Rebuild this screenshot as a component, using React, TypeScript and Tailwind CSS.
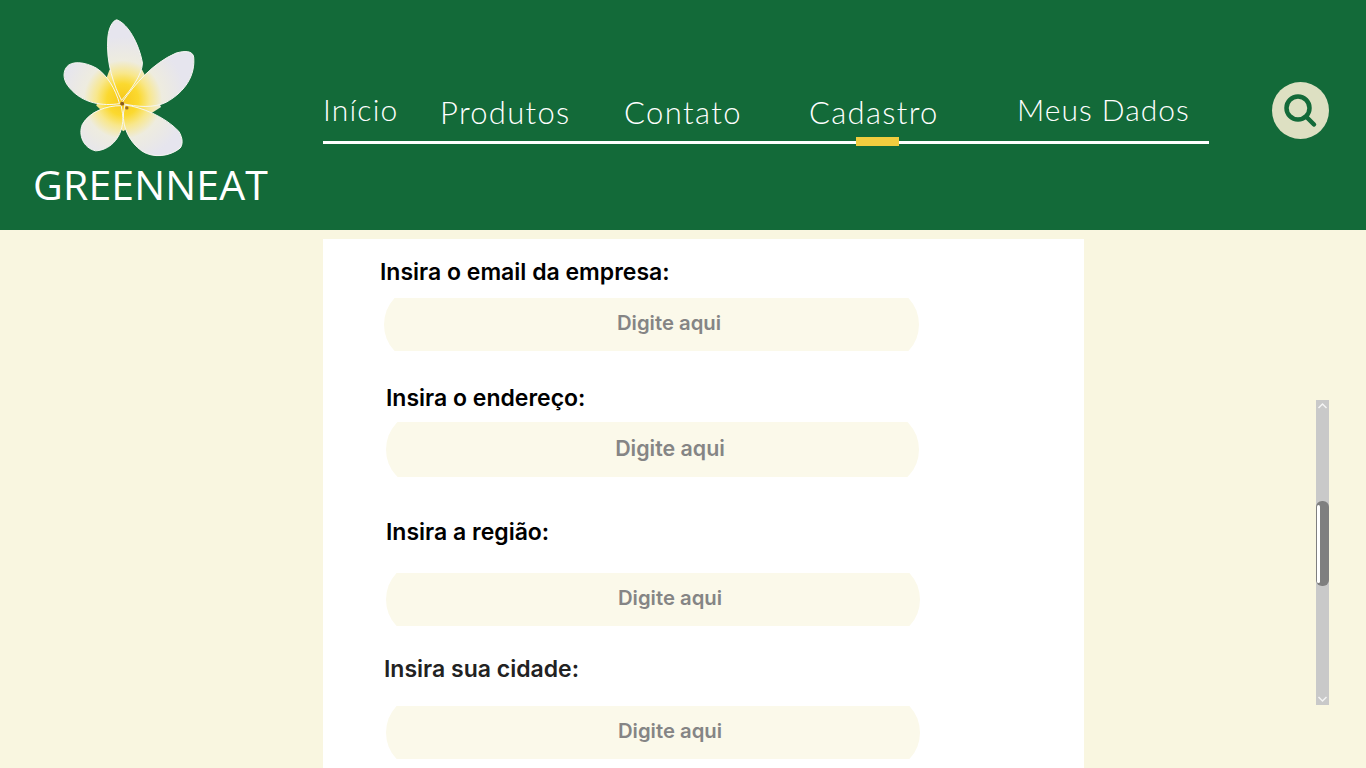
const navLinks = [
  { label: 'Início', cls: 'w-[117px] pb-[17px] text-[30px] tracking-[1.2px]' },
  { label: 'Produtos', cls: 'w-[184px] pb-[13px] text-[31px] tracking-[1.3px]' },
  { label: 'Contato', cls: 'w-[185px] pb-[13px] text-[31px] tracking-[1.4px]' },
  { label: 'Cadastro', cls: 'w-[208px] pb-[13px] text-[31px] tracking-[1.3px]' },
  { label: 'Meus Dados', cls: 'w-[192px] pb-[17px] text-[30px] tracking-[1px]' },
]

const fields = [
  {
    label: 'Insira o email da empresa:',
    labelCls: 'ml-[57px] pt-[18px] text-black',
    boxCls: 'ml-[61px] mt-[11px] h-[53px] w-[535px]',
    textCls: 'pl-[35px] pb-[3px] text-[20.3px]',
  },
  {
    label: 'Insira o endereço:',
    labelCls: 'ml-[63px] mt-[32px] text-black',
    boxCls: 'ml-[63px] mt-[9px] h-[55px] w-[533px]',
    textCls: 'pl-[35px] pb-[3px] text-[21.4px]',
  },
  {
    label: 'Insira a região:',
    labelCls: 'ml-[63px] mt-[40px] text-black',
    boxCls: 'ml-[63px] mt-[26px] h-[53px] w-[534px]',
    textCls: 'pl-[34px] pb-[3px] text-[20.3px]',
  },
  {
    label: 'Insira sua cidade:',
    labelCls: 'ml-[61px] mt-[28px] text-[#222222]',
    boxCls: 'ml-[63px] mt-[22px] h-[53px] w-[534px]',
    textCls: 'pl-[34px] pb-[3px] text-[20.3px]',
  },
]

function Flower() {
  return (
    <svg viewBox="130 55 400 420" className="h-[140px] w-[133px]">
      <defs>
        <radialGradient id="petal" gradientUnits="userSpaceOnUse" cx="310" cy="300" r="190">
          <stop offset="0" stopColor="#f7c81c" />
          <stop offset="0.25" stopColor="#fbd92f" />
          <stop offset="0.42" stopColor="#f8e78c" />
          <stop offset="0.62" stopColor="#eeecdf" />
          <stop offset="1" stopColor="#e6e5ee" />
        </radialGradient>
      </defs>
      <path d="M270 210 368 210 425 322 311 395 230 318Z" fill="url(#petal)" />
      <g fill="url(#petal)" stroke="#f6f6f2" strokeWidth="3" strokeLinejoin="round">
        <path d="M306 302C285 262 258 190 265 112C268 82 280 62 292 60C325 72 358 130 369 190C368 225 335 270 306 302Z" />
        <path d="M310 305C345 255 400 190 470 160C495 153 520 152 523 172C528 225 500 275 440 308C405 326 350 322 310 312Z" />
        <path d="M300 312C250 320 190 312 150 265C132 245 128 222 140 203C155 182 195 186 230 205C262 225 288 268 300 312Z" />
        <path d="M305 318C262 318 210 335 188 375C176 405 190 445 228 454C268 452 305 420 310 365C311 350 308 335 305 318Z" />
        <path d="M316 316C365 322 435 350 478 395C492 418 490 436 482 446C450 472 400 476 368 455C332 430 308 385 312 340Z" />
      </g>
      <circle cx="308" cy="312" r="6" fill="#8a5a1c" />
      <circle cx="322" cy="325" r="5" fill="#9a6a20" />
    </svg>
  )
}

function Scrollbar() {
  return (
    <div className="absolute left-[1316px] top-[400px] flex h-[305px] w-[13px] flex-col items-center justify-between bg-[#c9c9c9]">
      <svg viewBox="0 0 13 12" className="h-[12px] w-[13px]" fill="none" stroke="#f4f4f4" strokeWidth="1.5">
        <path d="M2.5 8 6.5 4l4 4" />
      </svg>
      <svg viewBox="0 0 13 12" className="h-[12px] w-[13px]" fill="none" stroke="#f4f4f4" strokeWidth="1.5">
        <path d="M2.5 4 6.5 8l4-4" />
      </svg>
      <div className="absolute left-0 top-[101px] flex h-[85px] w-[13px] items-center rounded-[6px] bg-[#7f7f7f]">
        <div className="ml-[1px] h-[78px] w-[3px] rounded-[2px] bg-white" />
      </div>
    </div>
  )
}

export default function App() {
  return (
    <div className="relative h-[768px] overflow-hidden bg-[#f9f6e0] font-['Inter',sans-serif]">
      <header className="flex h-[230px] bg-[#136a39] text-white">
        <div className="flex w-[323px] flex-col pl-[33px] pt-[18px]">
          <div className="ml-[30px]">
            <Flower />
          </div>
          <span className="pt-[1px] font-['Open_Sans',sans-serif] text-[41px] leading-[50px] tracking-[0.15px]">GREENNEAT</span>
        </div>

        <div className="relative mt-[88px] flex h-[56px] w-[886px] items-end border-b-[3px] border-white font-['Lato',sans-serif] font-light">
          {navLinks.map((link) => (
            <a key={link.label} className={`${link.cls} whitespace-nowrap leading-none`}>
              {link.label}
            </a>
          ))}
          <span className="absolute bottom-[-5px] left-[533px] h-[9px] w-[43px] bg-[#f2cd3f]" />
        </div>

        <div className="ml-[63px] mt-[82px] flex h-[57px] w-[57px] items-center justify-center rounded-full bg-[#dde0c2]">
          <svg viewBox="0 0 57 57" className="h-[57px] w-[57px]" fill="none" stroke="#136a39">
            <circle cx="26" cy="26" r="11.5" strokeWidth="4.5" />
            <path d="M34.5 35 42 42.5" strokeWidth="4.5" strokeLinecap="round" />
          </svg>
        </div>
      </header>

      <main className="ml-[323px] mt-[9px] h-[540px] w-[761px] bg-white">
        {fields.map((field) => (
          <div key={field.label} className="flex flex-col">
            <label className={`${field.labelCls} text-[23px] font-semibold leading-[30px]`}>{field.label}</label>
            <div className={`${field.boxCls} flex items-center overflow-hidden`}>
              <div className={`${field.textCls} flex h-[73px] w-full shrink-0 items-center justify-center rounded-[34px/36.5px] bg-[#fbf9ea] font-semibold text-[#858585]`}>
                Digite aqui
              </div>
            </div>
          </div>
        ))}
      </main>

      <Scrollbar />
    </div>
  )
}
